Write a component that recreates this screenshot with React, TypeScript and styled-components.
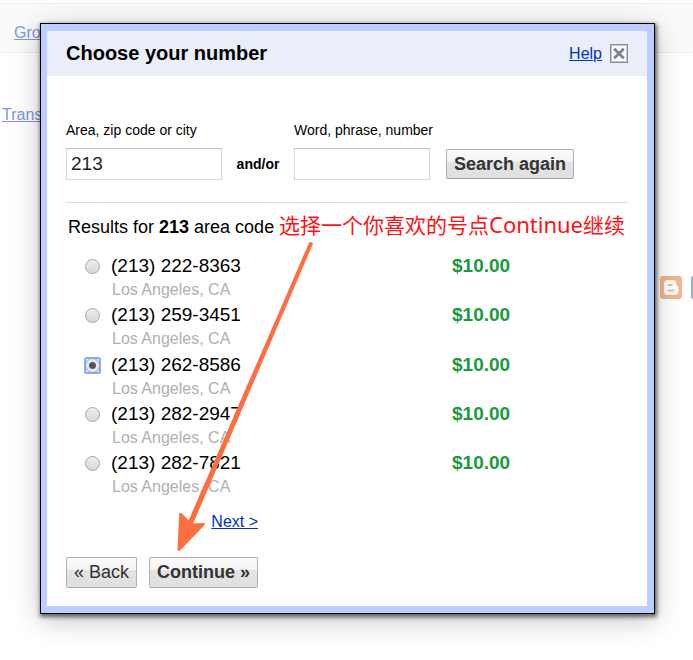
import React, { useState } from "react";
import styled, { createGlobalStyle } from "styled-components";

const GlobalStyle = createGlobalStyle`
  *, *::before, *::after { box-sizing: border-box; }
  body {
    margin: 0;
    background: #fff;
    color: #000;
    font-family: "Liberation Sans", Arial, sans-serif;
    overflow: hidden;
  }
`;

const Screen = styled.div`
  position: relative;
  min-height: 100vh;
`;

const Backdrop = styled.div`
  padding-top: 3px;
`;

const TopBar = styled.nav`
  display: flex;
  align-items: center;
  height: 50px;
  padding: 10px 14px 0;
  background: #fafafa;
  border-top: 1px solid #eee;
  border-bottom: 1px solid #eee;
`;

const PageBody = styled.div`
  padding: 52px 0 0 2px;
  display: flex;
  flex-direction: column;
  align-items: flex-start;
`;

const FadedLink = styled.a`
  color: #8095dc;
  font-size: 16px;
  line-height: 20px;
`;

const ShareRow = styled.div`
  display: flex;
  align-self: flex-end;
  gap: 9px;
  margin-top: 151px;
`;

const ShareLink = styled.a<{ $fill: string; $visible: number }>`
  display: flex;
  width: ${(p) => p.$visible}px;
  height: 23px;
  background: ${(p) => p.$fill};
  border-radius: ${(p) => (p.$visible < 10 ? "3px 0 0 3px" : "3px")};
`;

const Overlay = styled.div`
  position: absolute;
  inset: 0;
  padding: 23px 38px 46px 40px;
`;

const Dialog = styled.section`
  position: relative;
  padding: 7px 7px 7px 6px;
  background: #bccdff;
  border: 1px solid #000;
  box-shadow: 1px 2px 4px 1px rgba(0, 0, 0, 0.55), 0 6px 26px rgba(0, 0, 0, 0.24);
`;

const DialogHeader = styled.header`
  display: flex;
  align-items: center;
  gap: 8px;
  height: 45px;
  padding: 0 19px;
  background: #e9eef9;
`;

const Title = styled.h1`
  flex: 1;
  margin: 0;
  padding-bottom: 2px;
  font-size: 20px;
  line-height: 24px;
`;

const TextLink = styled.a`
  color: #0033bb;
  font-size: 16px;
  line-height: 20px;
`;

const CloseButton = styled.button`
  display: flex;
  padding: 0;
  border: 0;
  background: none;
`;

const Content = styled.div`
  padding: 44px 19px 19px;
  background: #fff;
`;

const SearchForm = styled.form`
  display: grid;
  grid-template-columns: 156px 72px 136px auto;
  row-gap: 8px;
  align-items: center;
  padding-bottom: 22px;
  border-bottom: 1px solid #ddd;
`;

const FieldLabel = styled.label<{ $column: number }>`
  grid-row: 1;
  grid-column: ${(p) => p.$column} / span 2;
  font-size: 14px;
  line-height: 20px;
  white-space: nowrap;
`;

const Field = styled.input`
  grid-row: 2;
  width: 100%;
  height: 32px;
  padding: 0 4px;
  border: 1px solid #d9d9d9;
  border-top-color: #c0c0c0;
  border-radius: 0;
  background: #fff;
  color: #222;
  font-family: inherit;
  font-size: 19px;
  outline: none;
`;

const Conjunction = styled.span`
  grid-row: 2;
  text-align: center;
  font-size: 14px;
  font-weight: bold;
`;

const Button = styled.button<{ $strong?: boolean; $lifted?: boolean }>`
  grid-row: 2;
  justify-self: start;
  height: 30px;
  padding: 0 7px;
  border: 1px solid #b0b0b0;
  border-bottom-color: ${(p) => (p.$lifted ? "#e3e3e3" : "#a0a0a0")};
  border-radius: 2px;
  background: linear-gradient(#fafafa 0, #f3f3f3 12px, #e3e3e3 12px, #e0e0e0 100%);
  box-shadow: ${(p) => (p.$lifted ? "0 1px 0 #a5a5a5" : "none")};
  color: #333;
  font-family: inherit;
  font-size: 18px;
  font-weight: ${(p) => (p.$strong ? "bold" : "normal")};
  line-height: 28px;
  white-space: nowrap;
`;

const SearchButton = styled(Button)`
  margin-left: 16px;
`;

const ResultsTitle = styled.h2`
  margin: 0;
  padding: 12px 0 0 2px;
  font-size: 18px;
  font-weight: normal;
  line-height: 24px;
`;

const Results = styled.ul`
  margin: 15px 0 0;
  padding: 0 0 0 18px;
  list-style: none;
`;

const ResultRow = styled.li<{ $selected: boolean }>`
  display: grid;
  grid-template-columns: 27px 341px auto;
  align-items: center;
  padding-top: ${(p) => (p.$selected ? 1 : 0)}px;
  padding-bottom: 2px;
`;

const Radio = styled.input`
  appearance: none;
  width: 15px;
  height: 15px;
  margin: 0;
  border: 1px solid #a6a6a6;
  border-radius: 50%;
  background: linear-gradient(#eee, #d8d8d8);
  &:checked {
    background: radial-gradient(circle, #555 0 3px, #e8e8e8 4px);
  }
`;

const RadioFrame = styled.span<{ $selected: boolean }>`
  display: flex;
  justify-self: start;
  border: 1px solid ${(p) => (p.$selected ? "#80aef8" : "transparent")};
  border-radius: 2px;
  background: ${(p) => (p.$selected ? "#dce8fb" : "none")};
  box-shadow: ${(p) => (p.$selected ? "inset 0 0 0 1px #80aef8" : "none")};
`;

const PhoneNumber = styled.label`
  font-size: 19px;
  line-height: 24px;
`;

const Price = styled.span`
  color: #1a9a3c;
  font-size: 19px;
  font-weight: bold;
  line-height: 22px;
`;

const Place = styled.span`
  grid-column: 2;
  padding: 1px 0 0 1px;
  color: #b0b0b0;
  font-size: 16px;
  line-height: 22px;
`;

const Footer = styled.footer`
  display: inline-flex;
  flex-direction: column;
  align-items: flex-end;
  gap: 25px;
  margin-top: 12px;
`;

const Actions = styled.div`
  display: flex;
  gap: 12px;
`;

const Note = styled.p`
  position: absolute;
  top: 185px;
  left: 238px;
  margin: 0;
  color: #ff1212;
  font-family: "Noto Sans CJK SC", sans-serif;
  font-size: 21px;
  line-height: 30px;
  white-space: nowrap;
`;

const NoteWord = styled.span`
  font-family: "Noto Sans", sans-serif;
  font-size: 22px;
`;

const Arrow = styled.svg`
  position: absolute;
  top: 217px;
  left: 135px;
  pointer-events: none;
`;

const numbers = [
  "(213) 222-8363",
  "(213) 259-3451",
  "(213) 262-8586",
  "(213) 282-2947",
  "(213) 282-7821",
];

export default function App() {
  const [selected, setSelected] = useState(2);
  return (
    <>
      <GlobalStyle />
      <Screen>
        <Backdrop>
          <TopBar>
            <FadedLink href="#">Groups</FadedLink>
          </TopBar>
          <PageBody>
            <FadedLink href="#">Translate</FadedLink>
            <ShareRow>
              <ShareLink href="#" aria-label="Blogger" $fill="#f5b48c" $visible={22}>
                <svg width="22" height="23" viewBox="0 0 22 23">
                  <path
                    d="M8 4h4.500a4 4 0 0 1 4 4v1q0 1 1 1h.2q.8 0 .8 1v4a4 4 0 0 1-4 4H8a4 4 0 0 1-4-4V8a4 4 0 0 1 4-4z"
                    fill="#fff"
                  />
                  <path d="M8.600 9h3.200M8.600 14.500h5" stroke="#f5b48c" strokeWidth="1.800" strokeLinecap="round" />
                </svg>
              </ShareLink>
              <ShareLink href="#" aria-label="Facebook" $fill="#9dabcf" $visible={2} />
            </ShareRow>
          </PageBody>
        </Backdrop>
        <Overlay>
          <Dialog role="dialog" aria-labelledby="dialog-title">
            <DialogHeader>
              <Title id="dialog-title">Choose your number</Title>
              <TextLink href="#">Help</TextLink>
              <CloseButton type="button" aria-label="Close">
                <svg width="18" height="19" viewBox="0 0 18 19">
                  <rect x="0.500" y="0.500" width="17" height="18" fill="#fbfbfd" stroke="#858c98" />
                  <rect x="1.500" y="1.500" width="15" height="16" fill="none" stroke="#c5c9d1" />
                  <path d="M4.200 4.700l9.600 9.600M13.800 4.700l-9.600 9.600" stroke="#7b828e" strokeWidth="2.800" />
                </svg>
              </CloseButton>
            </DialogHeader>
            <Content>
              <SearchForm onSubmit={(e) => e.preventDefault()}>
                <FieldLabel htmlFor="area" $column={1}>Area, zip code or city</FieldLabel>
                <FieldLabel htmlFor="word" $column={3}>Word, phrase, number</FieldLabel>
                <Field id="area" type="text" defaultValue="213" />
                <Conjunction>and/or</Conjunction>
                <Field id="word" type="text" />
                <SearchButton type="submit" $strong>Search again</SearchButton>
              </SearchForm>
              <ResultsTitle>
                Results for <b>213</b> area code
              </ResultsTitle>
              <Results>
                {numbers.map((number, i) => (
                  <ResultRow key={number} $selected={selected === i}>
                    <RadioFrame $selected={selected === i}>
                      <Radio
                        type="radio"
                        name="number"
                        id={`number-${i}`}
                        checked={selected === i}
                        onChange={() => setSelected(i)}
                      />
                    </RadioFrame>
                    <PhoneNumber htmlFor={`number-${i}`}>{number}</PhoneNumber>
                    <Price>$10.00</Price>
                    <Place>Los Angeles, CA</Place>
                  </ResultRow>
                ))}
              </Results>
              <Footer>
                <TextLink href="#">Next &gt;</TextLink>
                <Actions>
                  <Button type="button" $lifted>« Back</Button>
                  <Button type="button" $strong $lifted>Continue »</Button>
                </Actions>
              </Footer>
            </Content>
            <Note>
              选择一个你喜欢的号点<NoteWord>Continue</NoteWord>继续
            </Note>
            <Arrow width="140" height="314" viewBox="0 0 140 314" aria-hidden="true">
              <path
                d="M133 1.800Q134.200 .4 135.800 1.200T136.400 4L17.200 282.500L28 282q1.500.8.400 2.200L4 309.500Q2 311 1.500 308.500L3.200 273q.8-2 2.500-.8L12.600 279.500Z"
                fill="#ff6e40"
              />
            </Arrow>
          </Dialog>
        </Overlay>
      </Screen>
    </>
  );
}
